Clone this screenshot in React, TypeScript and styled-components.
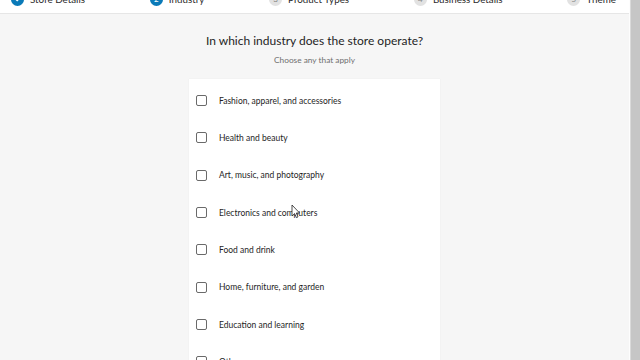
import React from "react";
import styled, { createGlobalStyle } from "styled-components";

interface StepProps {
  done?: boolean;
  active?: boolean;
}

const GlobalStyle = createGlobalStyle`
  html, body {
    margin: 0;
    padding: 0;
    height: 100%;
    overflow: hidden;
  }
  body {
    font-family: Lato, "Open Sans", sans-serif;
    background: #f6f6f6;
    color: #1e1e1e;
  }
`;

const Screen = styled.div`
  display: flex;
  width: 100vw;
  height: 100vh;
  overflow: hidden;
`;

const Main = styled.div`
  flex: 1;
  display: flex;
  flex-direction: column;
  align-items: center;
  background: #f6f6f6;
  overflow: hidden;
`;

const ScrollTrack = styled.div`
  width: 10px;
  background: #c6c6c6;
  border-left: 1px solid #fdfdfd;
  box-shadow: inset 1px 0 0 #dadada;
`;

const Header = styled.header`
  align-self: stretch;
  height: 13px;
  overflow: hidden;
  background: #fff;
  border-bottom: 1px solid #e6e6e6;
  flex-shrink: 0;
`;

const StepRow = styled.div`
  display: flex;
  align-items: center;
  height: 28px;
  margin-top: -15px;
  padding: 0 13px 0 11px;
`;

const Step = styled.div`
  display: flex;
  align-items: center;
  gap: 6px;
  flex-shrink: 0;
`;

const StepCircle = styled.span<StepProps>`
  width: 13px;
  height: 13px;
  border-radius: 50%;
  display: flex;
  align-items: center;
  justify-content: center;
  font-size: 8px;
  background: ${({ done, active }) => (done || active ? "#0a7ab8" : "#e2e2e2")};
  color: ${({ done, active }) => (done || active ? "#fff" : "#8a8a8a")};
`;

const StepLabel = styled.span`
  font-size: 9.8px;
  color: #2a2a2a;
  white-space: nowrap;
`;

const StepLine = styled.span`
  flex: 1;
  height: 1px;
  background: #dcdcdc;
  margin: 0 5px;
`;

const Title = styled.h1`
  margin: 18px 0 0;
  font-size: 12px;
  line-height: 18px;
  font-weight: 400;
  color: #1e1e1e;
`;

const Subtitle = styled.p`
  margin: 4px 0 0;
  font-size: 8.3px;
  line-height: 12px;
  color: #6f6f6f;
`;

const Card = styled.div`
  margin-top: 13px;
  width: 251px;
  flex-shrink: 0;
  background: #fff;
  padding: 3px 0 0 7px;
  box-sizing: border-box;
  box-shadow: 0 0 1px rgba(0, 0, 0, 0.08);
`;

const Option = styled.label`
  display: flex;
  align-items: center;
  height: 37.33px;
  gap: 12px;
  font-size: 8.5px;
  color: #1e1e1e;
  cursor: pointer;
`;

const Box = styled.span`
  width: 9px;
  height: 9px;
  border: 1px solid #6a6a6a;
  border-radius: 2px;
  flex-shrink: 0;
`;

const Cursor = styled.svg`
  position: fixed;
  left: 291px;
  top: 204px;
  pointer-events: none;
`;

const CheckMark = () => (
  <svg width="8" height="8" viewBox="0 0 8 8">
    <path d="M1.6 4.2 L3.2 5.7 L6.4 2.4" fill="none" stroke="#fff" strokeWidth="1.2" />
  </svg>
);

const steps = [
  { label: "Store Details", done: true },
  { label: "Industry", active: true },
  { label: "Product Types" },
  { label: "Business Details" },
  { label: "Theme" },
];

const industries = [
  "Fashion, apparel, and accessories",
  "Health and beauty",
  "Art, music, and photography",
  "Electronics and computers",
  "Food and drink",
  "Home, furniture, and garden",
  "Education and learning",
  "Other",
];

const App = () => {
  return (
    <Screen>
      <GlobalStyle />
      <Main>
        <Header>
          <StepRow>
            {steps.map(({ label, done, active }, index) => (
              <React.Fragment key={label}>
                <Step>
                  <StepCircle done={done} active={active}>
                    {done ? <CheckMark /> : index + 1}
                  </StepCircle>
                  <StepLabel>{label}</StepLabel>
                </Step>
                {index < steps.length - 1 && <StepLine />}
              </React.Fragment>
            ))}
          </StepRow>
        </Header>
        <Title>In which industry does the store operate?</Title>
        <Subtitle>Choose any that apply</Subtitle>
        <Card>
          {industries.map((name) => (
            <Option key={name}>
              <Box />
              <span>{name}</span>
            </Option>
          ))}
        </Card>
      </Main>
      <ScrollTrack />
      <Cursor width="10" height="15" viewBox="0 0 10 15">
        <path d="M1 1 L1 12 L3.6 9.6 L5.4 13.6 L7 12.9 L5.3 9 L8.6 9 Z" fill="#fff" stroke="#222" strokeWidth="0.8" />
      </Cursor>
    </Screen>
  );
};

export default App;
